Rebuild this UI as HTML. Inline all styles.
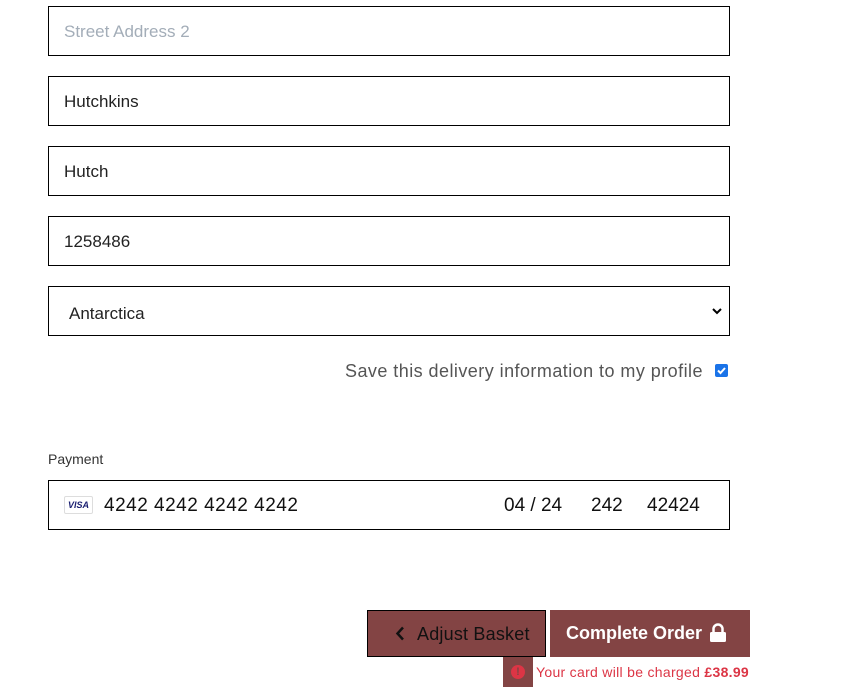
<!DOCTYPE html>
<html><head><style>
body{margin:0;background:#fff;width:858px;height:691px;position:relative;font-family:"Liberation Sans",sans-serif;overflow:hidden}
.in{position:absolute;left:48px;width:680px;height:48px;border:1px solid #000;box-sizing:content-box;font-size:17px;line-height:50px;color:#222}
.in span{position:absolute;left:15px}
.abs{position:absolute}
</style></head><body>
<div class="in" style="top:6px"><span style="color:#a3adb8">Street Address 2</span></div>
<div class="in" style="top:76px"><span>Hutchkins</span></div>
<div class="in" style="top:146px"><span>Hutch</span></div>
<div class="in" style="top:216px"><span>1258486</span></div>
<div class="in" style="top:286px"><span style="left:20px;top:2px">Antarctica</span>
<svg class="abs" style="left:663px;top:20px" width="10" height="8" viewBox="0 0 10 8"><path d="M1 2l4 4 4-4" fill="none" stroke="#000" stroke-width="2"/></svg></div>
<div class="abs" style="left:345px;top:361px;font-size:18px;letter-spacing:0.45px;color:#555">Save this delivery information to my profile</div>
<div class="abs" style="left:715px;top:364px;width:13px;height:13px;background:#1a73e8;border-radius:2px"><svg width="13" height="13"><path d="M3 6.5l2.5 2.5 4.5-5" fill="none" stroke="#fff" stroke-width="2"/></svg></div>
<div class="abs" style="left:48px;top:451px;font-size:14px;color:#333">Payment</div>
<div class="in" style="top:480px;font-size:19px;color:#111">
<div class="abs" style="left:15px;top:15px;width:29px;height:18px;border:1px solid #ddd;border-radius:2px;box-sizing:border-box;font:italic bold 9px/16px 'Liberation Sans',sans-serif;color:#1a1f71;text-align:center">VISA</div>
<span style="left:55px;letter-spacing:0.5px">4242 4242 4242 4242</span>
<span style="left:455px">04 / 24</span>
<span style="left:542px">242</span>
<span style="left:598px">42424</span>
</div>
<div class="abs" style="left:367px;top:610px;width:177px;height:45px;background:#834444;border:1px solid #000;font-size:18px;line-height:46px;color:#111">
<svg class="abs" style="left:27px;top:15px" width="10" height="15"><path d="M8 1.5L2.5 7.5 8 13.5" fill="none" stroke="#111" stroke-width="2.5"/></svg>
<span class="abs" style="left:49px;letter-spacing:0.2px">Adjust Basket</span></div>
<div class="abs" style="left:550px;top:610px;width:200px;height:47px;background:#834444;font-size:18px;line-height:47px;color:#fff;font-weight:bold">
<span class="abs" style="left:16px">Complete Order</span>
<svg class="abs" style="left:159px;top:13px" width="18" height="20"><path d="M4.5 9V6a4.5 4.5 0 019 0v3" fill="none" stroke="#fff" stroke-width="2.5"/><rect x="1" y="9" width="16" height="10" rx="1.5" fill="#fff"/></svg></div>
<div class="abs" style="left:503px;top:657px;width:30px;height:30px;background:#834444">
<div class="abs" style="left:8px;top:8px;width:14px;height:14px;border-radius:50%;background:#dc3545;color:#834444;font:bold 11px/14px 'Liberation Sans',sans-serif;text-align:center">!</div></div>
<div class="abs" style="left:536px;top:664px;font-size:14px;letter-spacing:0.3px;color:#dc3545">Your card will be charged <b>£38.99</b></div>
</body></html>
